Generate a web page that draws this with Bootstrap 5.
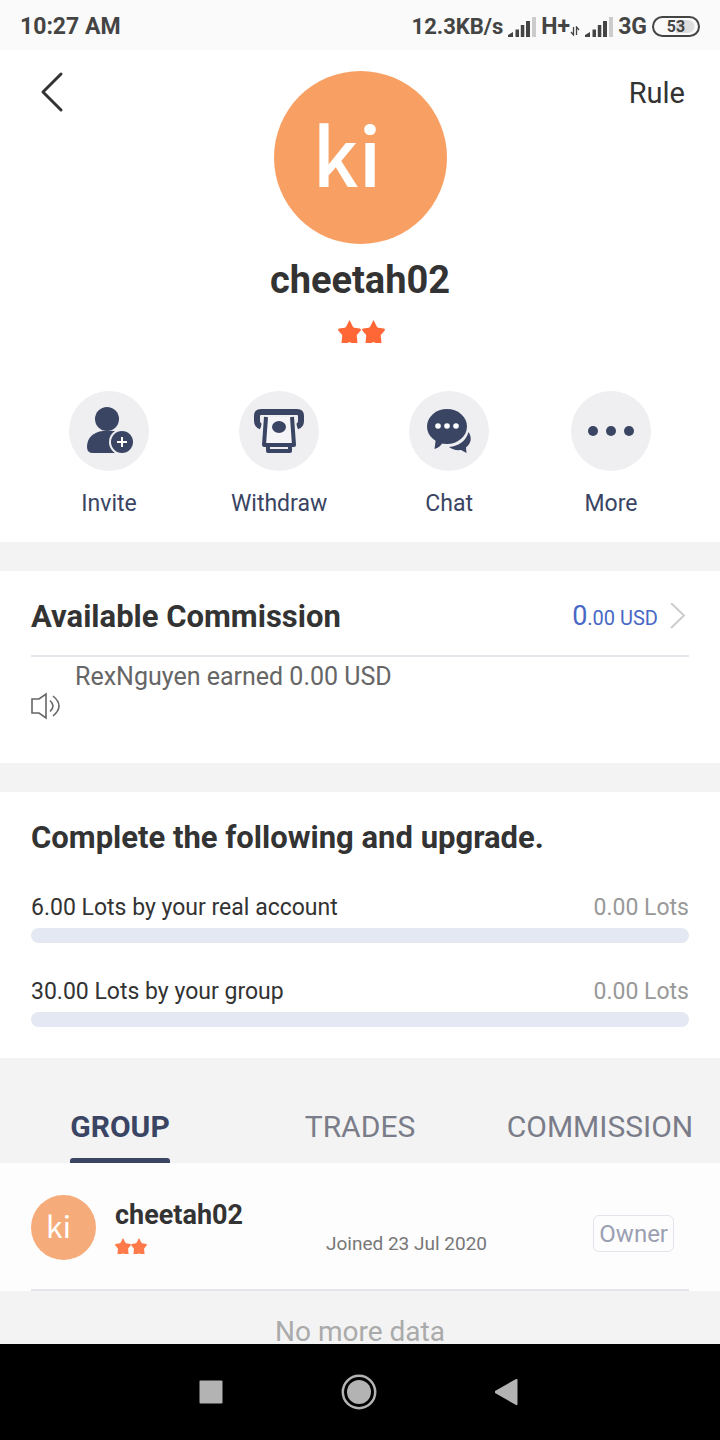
<!DOCTYPE html>
<html lang="en">
<head>
<meta charset="utf-8">
<meta name="viewport" content="width=device-width, initial-scale=1">
<title>Community</title>
<link href="https://cdn.jsdelivr.net/npm/bootstrap@5.3.0/dist/css/bootstrap.min.css" rel="stylesheet">
<style>
  :root { --navy: #3a4463; --ink: #333; --rule: #e5e6ec; --band: #f3f3f3; }
  body { font-family: Roboto, "Liberation Sans", sans-serif; color: var(--ink); background: var(--band); }
  svg { display: block; flex: none; }
  button { font-family: inherit; }
  .px-page { padding-left: 31px; padding-right: 31px; }

  .status-bar { height: 50px; padding: 3px 20px 0; background: #fafafa; color: #444; font-size: 23px; font-weight: 700; line-height: 28px; }
  .status-info { gap: 5px; }
  .status-rate { font-size: 22px; }

  .panel { background: #fff; }
  .panel + .panel { margin-top: 29px; }

  .profile { padding: 21px 35px 0; display: grid; grid-template-columns: 1fr auto 1fr; align-items: start; }
  .back-link { color: var(--ink); padding: 0 5px; }
  .rule-link { color: var(--ink); font-size: 29px; line-height: 44px; }
  .face { border-radius: 50%; color: #fff; font-family: "Noto Sans CJK SC", sans-serif; display: flex; align-items: center; justify-content: center; flex: none; }
  .face-lg { width: 173px; height: 173px; background: #f8a064; font-size: 80px; font-weight: 500; line-height: 100px; padding: 0 26px 12px 0; }
  .face-sm { width: 65px; height: 65px; background: #f6ac7a; font-size: 30px; line-height: 40px; padding: 0 10px 6px 0; }
  .user-name { font-size: 38px; font-weight: 700; line-height: 44px; margin: 14px 0 18px; }
  .stars { color: #ff6737; }
  .actions { padding: 47px 69px 24px; }
  .action { border: 0; background: none; padding: 0; min-width: 80px; color: var(--navy); font-size: 23px; line-height: 28px; gap: 19px; }
  .action-disc { width: 80px; height: 80px; background: #efeff1; }

  .heading { font-size: 31px; font-weight: 700; line-height: 40px; margin: 0; }
  .commission-row { padding: 26px 0 18px; border-bottom: 2px solid var(--rule); }
  .amount { height: 40px; padding-top: 2px; color: #4868c4; font-size: 20px; line-height: 40px; gap: 12px; }
  .amount-major { font-size: 27px; line-height: 1; }
  .notice { height: 98px; gap: 14px; color: #666; font-size: 25px; line-height: 40px; }

  .upgrade { padding-top: 26px; padding-bottom: 31px; }
  .goal { font-size: 23px; line-height: 30px; }
  .heading + .goal { margin-top: 35px; }
  .goal + .goal { margin-top: 34px; }
  .goal-now { color: #999; }
  .goal .progress { --bs-progress-height: 15px; --bs-progress-bg: #e4e8f2; --bs-progress-border-radius: 8px; margin-top: 5px; }

  .tab-strip { padding-top: 49px; }
  .tab-btn { border: 0; background: none; padding: 0; color: #7a7d89; font-size: 30px; line-height: 40px; }
  .tab-btn span { display: inline-block; height: 56px; vertical-align: top; }
  .tab-btn.active { color: var(--navy); font-weight: 700; }
  .tab-btn.active span::after { content: ""; display: block; height: 5px; margin-top: 11px; background: var(--navy); border-radius: 3px 3px 0 0; }

  .member-list { background: #fdfdfd; }
  .member { display: grid; grid-template-columns: 65px 192px 1fr auto; column-gap: 19px; padding: 32px 15px 29px 0; border-bottom: 2px solid var(--rule); }
  .member-name { font-size: 27px; font-weight: 700; line-height: 32px; padding-top: 4px; }
  .member .stars { color: #ff7a4b; padding-top: 7px; }
  .joined { color: #777; font-size: 19px; line-height: 24px; padding-top: 37px; }
  .owner-tag { border: 1px solid #e3e4ec; border-radius: 6px; color: #9a9fb2; font-size: 24px; line-height: 35px; padding: 1px 5px; height: 37px; margin-top: 20px; }
  .list-end { color: #aaa; font-size: 28px; line-height: 24px; padding-top: 29px; }

  .system-bar { height: 96px; padding-right: 2px; background: #000; color: #b3b3b3; }
  .system-bar button { border: 0; background: none; padding: 0; color: inherit; width: 148px; display: flex; justify-content: center; }
</style>
</head>
<body class="d-flex flex-column min-vh-100">

<svg width="0" height="0" class="d-none" aria-hidden="true">
  <symbol id="star" viewBox="0 0 23 23"><path d="M11.500 0 14.800 6.500Q15.300 7.500 16.200 7.700L22 8.500Q23.500 9.300 22.500 10.800L19.200 14.600Q18.700 15.200 18.800 16.100L19.500 23H13.500L11.500 22 9.500 23H3.500L4.200 16.100Q4.300 15.200 3.800 14.600L.5 10.800Q-.5 9.300 1 8.500L6.800 7.700Q7.700 7.500 8.200 6.500Z" fill="currentColor"/></symbol>
  <symbol id="signal" viewBox="0 0 28 20"><path d="M0 20V18L5 15V20ZM7.500 12.500h3.500V20h-3.500ZM12.800 8h3.500V20h-3.500ZM18 4h4V20h-4Z" fill="#444"/><path d="M24 0h4v20h-4Z" fill="#ccc"/></symbol>
</svg>

<header class="status-bar d-flex align-items-center justify-content-between">
  <span>10:27 AM</span>
  <div class="status-info d-flex align-items-center">
    <span class="status-rate">12.3KB/s</span>
    <svg width="28" height="20"><use href="#signal"/></svg>
    <div class="d-flex align-items-center">
      <span>H+</span>
      <svg width="10" height="10" viewBox="0 0 9 10" class="mt-2" fill="none" stroke="#444" stroke-width="1.300"><path d="M3 1V9L.5 6M6 9V1L8.500 4"/></svg>
    </div>
    <svg width="28" height="20"><use href="#signal"/></svg>
    <span>3G</span>
    <svg width="48" height="22" viewBox="0 0 48 22"><rect x="1" y="1" width="46" height="19" rx="9.500" fill="#fafafa" stroke="#444" stroke-width="2"/><path d="M24 4h12a6.500 6.500 0 0 1 0 13H24Z" fill="#ddd"/><text x="24" y="16" text-anchor="middle" font-size="16" font-weight="700" fill="#444">53</text></svg>
  </div>
</header>

<main>
  <section class="panel">
    <div class="profile">
      <a href="#" class="back-link" aria-label="Back"><svg width="24" height="42" viewBox="0 0 24 42" fill="none" stroke="currentColor" stroke-width="3" stroke-linecap="round" stroke-linejoin="round"><path d="M21 3 3 21 21 39"/></svg></a>
      <div class="face face-lg">ki</div>
      <a href="#" class="rule-link text-end text-decoration-none">Rule</a>
    </div>
    <h1 class="user-name text-center">cheetah02</h1>
    <div class="stars d-flex justify-content-center gap-0 ps-1" role="img" aria-label="2 stars">
      <svg width="24" height="24" viewBox="0 0 24 24"><use href="#star" width="23" height="23"/></svg>
      <svg width="24" height="24" viewBox="0 0 24 24"><use href="#star" width="23" height="23"/></svg>
    </div>
    <div class="actions d-flex justify-content-between">
      <button type="button" class="action d-flex flex-column align-items-center">
        <span class="action-disc rounded-circle"><svg width="80" height="80" viewBox="0 0 80 80"><path d="M34 40C24 41 18 47 18 56q0 6 6 6H46V40Z" fill="#3a4463"/><circle cx="38" cy="28" r="12" fill="#3a4463"/><circle cx="53" cy="51" r="13" fill="#efeff1"/><circle cx="53" cy="51" r="11" fill="#3a4463"/><path d="M53 46V56M48 51H58" stroke="#fff" stroke-width="2"/></svg></span>
        Invite
      </button>
      <button type="button" class="action d-flex flex-column align-items-center">
        <span class="action-disc rounded-circle"><svg width="80" height="80" viewBox="0 0 80 80" fill="none" stroke="#3a4463"><path d="M22 35.500Q18 34 18 30V25Q18 21 22 21H58Q62 21 62 25V30Q62 34 58 35.500" stroke-width="6"/><path d="M22.500 24H57.500V40H22.500Z" fill="#efeff1" stroke="none"/><path d="M27 26 25 54H55L53 26" fill="#f5f5f7" stroke-width="4" stroke-linejoin="round"/><path d="M29 55V60H51V55" stroke-width="4" stroke-linejoin="round"/><ellipse cx="40" cy="36" rx="7" ry="6" fill="#3a4463" stroke="none"/></svg></span>
        Withdraw
      </button>
      <button type="button" class="action d-flex flex-column align-items-center">
        <span class="action-disc rounded-circle"><svg width="80" height="80" viewBox="0 0 80 80" fill="#3a4463"><path d="M59.500 41C63 46 62.500 52 57 56.500L57.500 62 52 59C47 59.500 43 58.500 40 56 50 55 57 50 59.500 41Z"/><ellipse cx="38" cy="35.500" rx="20" ry="17.500"/><path d="M27 47 25.500 58Q31 56.500 34 51Z"/><g fill="#fff"><circle cx="29" cy="35" r="2.800"/><circle cx="38" cy="35" r="2.800"/><circle cx="47" cy="35" r="2.800"/></g></svg></span>
        Chat
      </button>
      <button type="button" class="action d-flex flex-column align-items-center">
        <span class="action-disc rounded-circle"><svg width="80" height="80" viewBox="0 0 80 80" fill="#3a4463"><circle cx="22" cy="40" r="5"/><circle cx="40" cy="40" r="5"/><circle cx="58" cy="40" r="5"/></svg></span>
        More
      </button>
    </div>
  </section>

  <section class="panel px-page pb-2">
    <div class="commission-row d-flex justify-content-between">
      <h2 class="heading">Available Commission</h2>
      <a href="#" class="amount d-flex align-items-center text-decoration-none">
        <span><span class="amount-major">0</span>.00 USD</span>
        <svg width="19" height="30" viewBox="0 0 19 30" fill="none" stroke="#ccc" stroke-width="2"><path d="M1 0 14 12.500 1 25"/></svg>
      </a>
    </div>
    <div class="notice d-flex">
      <svg class="align-self-center" width="30" height="28" viewBox="0 0 30 28" fill="none" stroke="#666" stroke-width="1.600"><path d="M1 7H8L15 2V26L8 21H1Z"/><path d="M19 8.500Q25 14 19 19.500M22 4Q34 14 22 24"/></svg>
      <span>RexNguyen earned 0.00 USD</span>
    </div>
  </section>

  <section class="panel upgrade px-page">
    <h2 class="heading">Complete the following and upgrade.</h2>
    <div class="goal">
      <div class="d-flex justify-content-between"><span>6.00 Lots by your real account</span><span class="goal-now">0.00 Lots</span></div>
      <div class="progress" role="progressbar" aria-label="Real account lots" aria-valuenow="0" aria-valuemin="0" aria-valuemax="6"><div class="progress-bar" style="width: 0%"></div></div>
    </div>
    <div class="goal">
      <div class="d-flex justify-content-between"><span>30.00 Lots by your group</span><span class="goal-now">0.00 Lots</span></div>
      <div class="progress" role="progressbar" aria-label="Group lots" aria-valuenow="0" aria-valuemin="0" aria-valuemax="30"><div class="progress-bar" style="width: 0%"></div></div>
    </div>
  </section>

  <div class="tab-strip d-flex" role="tablist">
    <button type="button" role="tab" aria-selected="true" class="tab-btn active col-4"><span>GROUP</span></button>
    <button type="button" role="tab" aria-selected="false" class="tab-btn col-4"><span>TRADES</span></button>
    <button type="button" role="tab" aria-selected="false" class="tab-btn col-4"><span>COMMISSION</span></button>
  </div>

  <section class="member-list px-page">
    <div class="member">
      <div class="face face-sm">ki</div>
      <div>
        <div class="member-name">cheetah02</div>
        <div class="stars d-flex" role="img" aria-label="2 stars">
          <svg width="16" height="16"><use href="#star"/></svg>
          <svg width="16" height="16"><use href="#star"/></svg>
        </div>
      </div>
      <div class="joined">Joined 23 Jul 2020</div>
      <div class="owner-tag">Owner</div>
    </div>
  </section>
  <div class="list-end text-center">No more data</div>
</main>

<nav class="system-bar d-flex align-items-center justify-content-center mt-auto" aria-label="System">
  <button type="button" aria-label="Recent apps"><svg width="24" height="24" viewBox="0 0 24 24" fill="currentColor"><rect x=".5" y=".5" width="23" height="23" rx="1"/></svg></button>
  <button type="button" aria-label="Home"><svg width="36" height="36" viewBox="0 0 36 36"><circle cx="18" cy="18" r="16.200" fill="none" stroke="currentColor" stroke-width="2.500"/><circle cx="18" cy="18" r="12" fill="currentColor"/></svg></button>
  <button type="button" aria-label="Back"><svg width="24" height="28" viewBox="0 0 24 28" fill="currentColor"><path d="M21 1Q22.500.5 22.500 2V26Q22.500 27.500 21 27L0 15Q-1 14 0 13Z"/></svg></button>
</nav>

<script src="https://cdn.jsdelivr.net/npm/bootstrap@5.3.0/dist/js/bootstrap.bundle.min.js"></script>
</body>
</html>
